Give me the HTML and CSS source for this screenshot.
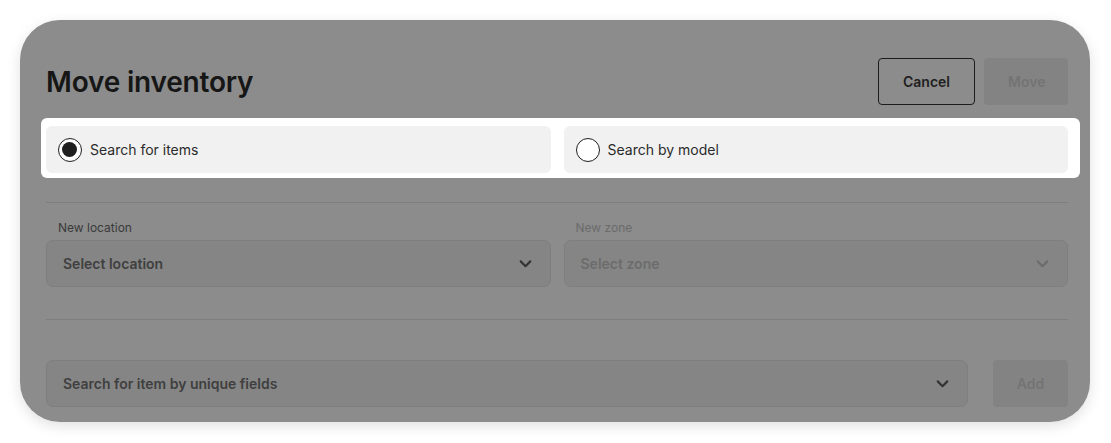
FILE: index.html
```html
<!DOCTYPE html>
<html lang="en">
<head>
    <meta charset="UTF-8">
    <meta name="viewport" content="width=device-width, initial-scale=1.0">
    <title>Move inventory</title>
    <link rel="stylesheet" href="styles.css">
</head>
<body>

<div class="modal">
    <div class="modal-header">
        <h2>Move inventory</h2>
        <div class="actions">
            <button class="btn btn-outline">Cancel</button>
            <button class="btn btn-disabled">Move</button>
        </div>
    </div>

    <!-- highlighted step of the tour -->
    <div class="spotlight">
        <label class="option">
            <span class="radio checked"></span>
            Search for items
        </label>
        <label class="option">
            <span class="radio"></span>
            Search by model
        </label>
    </div>

    <hr class="divider divider-top">

    <div class="fields">
        <div class="field">
            <span class="field-label">New location</span>
            <div class="select">
                <span>Select location</span>
                <svg class="chevron" viewBox="0 0 16 16"><path d="M3.5 6l4.5 4.5L12.5 6"/></svg>
            </div>
        </div>
        <div class="field disabled">
            <span class="field-label">New zone</span>
            <div class="select">
                <span>Select zone</span>
                <svg class="chevron" viewBox="0 0 16 16"><path d="M3.5 6l4.5 4.5L12.5 6"/></svg>
            </div>
        </div>
    </div>

    <hr class="divider divider-bottom">

    <div class="search-row">
        <div class="select search">
            <span>Search for item by unique fields</span>
            <svg class="chevron" viewBox="0 0 16 16"><path d="M3.5 6l4.5 4.5L12.5 6"/></svg>
        </div>
        <button class="btn btn-disabled btn-add">Add</button>
    </div>
</div>

</body>
</html>
```

FILE: styles.css
```css
body {
    font-family: Inter, "Noto Sans", sans-serif;
    margin: 0;
    padding: 20px;
    background-color: #ffffff;
}
.modal {
    width: 1070px;
    box-sizing: border-box;
    background-color: #8c8c8c;
    border-radius: 40px;
    padding: 38px 22px 15px 26px;
    box-shadow: 0 4px 14px rgba(0, 0, 0, 0.12);
}
.modal-header {
    display: flex;
    align-items: center;
    justify-content: space-between;
    height: 47px;
}
h2 {
    margin: 0;
    font-size: 28px;
    font-weight: 600;
    color: #161616;
    letter-spacing: -0.2px;
}
.actions {
    display: flex;
    gap: 9px;
}
.btn {
    height: 47px;
    border-radius: 4px;
    font-family: inherit;
    font-size: 14px;
    font-weight: 600;
    padding: 0 24px;
    cursor: pointer;
}
.btn-outline {
    width: 97px;
    background: transparent;
    border: 1px solid #1c1c1c;
    color: #1f1f1f;
}
.btn-disabled {
    width: 84px;
    background-color: #838383;
    border: none;
    color: #747474;
}
.btn-add {
    width: 75px;
    padding: 0;
}

.spotlight {
    display: flex;
    gap: 13px;
    background-color: #ffffff;
    border-radius: 6px;
    margin: 13px -12px 0 -5px;
    padding: 8px 12px 5px 5px;
}
.option {
    flex: 1;
    display: flex;
    align-items: center;
    gap: 8px;
    height: 47px;
    box-sizing: border-box;
    padding: 0 12px;
    background-color: #f1f1f1;
    border-radius: 6px;
    font-size: 14px;
    color: #2b2b2b;
}
.radio {
    width: 24px;
    height: 24px;
    box-sizing: border-box;
    border: 1.5px solid #1f1f1f;
    border-radius: 50%;
    background: #ffffff;
    position: relative;
}
.radio.checked::after {
    content: "";
    position: absolute;
    left: 3px;
    top: 3px;
    width: 15px;
    height: 15px;
    border-radius: 50%;
    background: #1f1f1f;
}

.divider {
    border: none;
    border-top: 1px solid #7e7e7e;
    margin: 0;
}
.divider-top {
    margin-top: 24px;
}
.divider-bottom {
    margin-top: 32px;
}

.fields {
    display: flex;
    gap: 13px;
    margin-top: 17px;
}
.field {
    flex: 1;
    display: flex;
    flex-direction: column;
}
.field-label {
    font-size: 12px;
    color: #3a3a3a;
    padding-left: 12px;
    margin-bottom: 5px;
    line-height: 15px;
}
.select {
    display: flex;
    align-items: center;
    justify-content: space-between;
    height: 47px;
    box-sizing: border-box;
    padding: 0 16px;
    background-color: #858585;
    border: 1px solid #7e7e7e;
    border-radius: 7px;
    font-size: 14px;
    font-weight: 600;
    color: #3f3f3f;
}
.chevron {
    width: 17px;
    height: 17px;
    fill: none;
    stroke: #333333;
    stroke-width: 2;
    stroke-linecap: round;
    stroke-linejoin: round;
}
.field.disabled .field-label {
    color: #6b6b6b;
}
.field.disabled .select {
    color: #6c6c6c;
}
.field.disabled .chevron {
    stroke: #6c6c6c;
}

.search-row {
    display: flex;
    gap: 25px;
    margin-top: 40px;
}
.search {
    flex: 1;
}
```
